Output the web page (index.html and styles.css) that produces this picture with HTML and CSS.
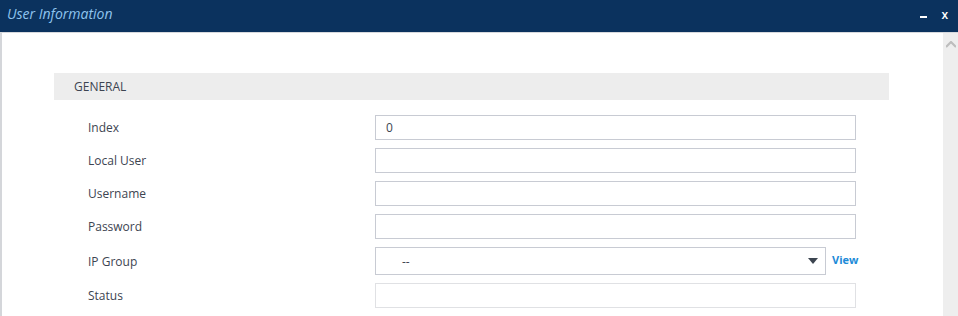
FILE: index.html
```html
<!DOCTYPE html>
<html lang="en">
<head>
    <meta charset="UTF-8">
    <title>User Information</title>
    <link rel="stylesheet" href="styles.css">
</head>
<body>
    <div class="window">
        <div class="titlebar">
            <div class="title">User Information</div>
            <div class="controls">
                <span class="ctl-min"></span>
                <span class="ctl-close">x</span>
            </div>
        </div>
        <div class="body">
            <div class="content">
                <div class="section">GENERAL</div>
                <div class="form">
                    <div class="row">
                        <label>Index</label>
                        <div class="field"><input type="text" value="0"></div>
                    </div>
                    <div class="row">
                        <label>Local User</label>
                        <div class="field"><input type="text"></div>
                    </div>
                    <div class="row">
                        <label>Username</label>
                        <div class="field"><input type="text"></div>
                    </div>
                    <div class="row">
                        <label>Password</label>
                        <div class="field"><input type="text"></div>
                    </div>
                    <div class="row row-select">
                        <label>IP Group</label>
                        <div class="field">
                            <div class="select">
                                <span>--</span>
                                <svg width="10" height="6" viewBox="0 0 10 6"><path d="M0 0 H10 L5 6 Z" fill="#3c4550"/></svg>
                            </div>
                            <a class="view" href="#">View</a>
                        </div>
                    </div>
                    <div class="row">
                        <label>Status</label>
                        <div class="field"><input type="text" class="disabled" disabled></div>
                    </div>
                </div>
            </div>
            <div class="scrollbar">
                <svg width="10" height="7" viewBox="0 0 10 7"><path d="M0 6 L5 1 L10 6" fill="none" stroke="#bdbdbd" stroke-width="2.2"/></svg>
            </div>
        </div>
    </div>
</body>
</html>
```

FILE: styles.css
```css
body {
    margin: 0;
    font-family: 'Open Sans', Arial, sans-serif;
    background: #fff;
}
.window {
    width: 958px;
    height: 316px;
    display: flex;
    flex-direction: column;
    overflow: hidden;
}
.titlebar {
    height: 32px;
    background: #0b325e;
    display: flex;
    align-items: center;
    justify-content: space-between;
    padding: 0 0 0 7px;
    border-bottom: 1px solid #d7d9dd;
    flex-shrink: 0;
}
.title {
    color: #8fc4ee;
    font-style: italic;
    font-size: 14px;
    margin-top: -6px;
}
.controls {
    display: flex;
    align-items: center;
    gap: 14px;
    padding-right: 10px;
    margin-top: -2px;
}
.ctl-min {
    width: 7px;
    height: 2px;
    background: #fff;
    margin-top: 4px;
}
.ctl-close {
    color: #fff;
    font-size: 12px;
    font-weight: 600;
    line-height: 1;
}
.body {
    flex: 1;
    display: flex;
}
.content {
    flex: 1;
    border-left: 2px solid #d4d6da;
    padding: 40px 54px 0 52px;
}
.section {
    height: 27px;
    background: #ededed;
    color: #3d4451;
    font-size: 12px;
    line-height: 27px;
    padding-left: 20px;
}
.form {
    padding: 15px 0 0 34px;
    display: flex;
    flex-direction: column;
    gap: 8px;
}
.row {
    display: flex;
    align-items: center;
    height: 25px;
}
.row-select {
    height: 28px;
}
.row label {
    width: 287px;
    color: #3d4451;
    font-size: 12px;
}
.field {
    display: flex;
    align-items: center;
}
.field input {
    box-sizing: border-box;
    width: 481px;
    height: 25px;
    border: 1px solid #c8cbd3;
    padding: 0 10px;
    font-family: 'Open Sans', Arial, sans-serif;
    font-size: 12px;
    color: #3d4451;
    background: #fff;
    outline: none;
}
.field input.disabled {
    border-color: #e0e1e4;
}
.select {
    box-sizing: border-box;
    width: 451px;
    height: 28px;
    border: 1px solid #c8cbd3;
    display: flex;
    align-items: center;
    justify-content: space-between;
    padding: 0 7px 0 26px;
    font-size: 12px;
    color: #3d4451;
}
.view {
    margin-left: 6px;
    color: #1d8bd8;
    font-size: 11px;
    font-weight: 700;
    text-decoration: none;
    margin-top: -4px;
}
.scrollbar {
    width: 15px;
    background: #eeeeee;
    display: flex;
    justify-content: center;
    padding-top: 8px;
    box-sizing: border-box;
}
```
